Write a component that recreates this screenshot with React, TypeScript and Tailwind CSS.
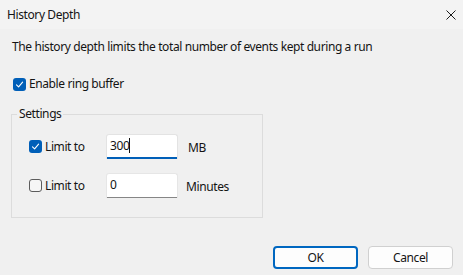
import React from "react";

const Check = () => (
  <svg width="9" height="9" viewBox="0 0 9 9" fill="none">
    <path d="M1.5 4.8 L3.6 6.8 L7.6 2.2" stroke="white" strokeWidth="1.1" strokeLinecap="round" strokeLinejoin="round" />
  </svg>
);

function Box({ checked }: { checked: boolean }) {
  return checked ? (
    <span className="w-[13px] h-[13px] rounded-[3px] bg-[#005fb8] flex items-center justify-center shrink-0">
      <Check />
    </span>
  ) : (
    <span className="w-[13px] h-[13px] rounded-[3px] border border-[#5c5c5c] bg-[#f6f6f6] shrink-0" />
  );
}

export default function App() {
  return (
    <div
      className="w-[463px] h-[275px] bg-[#f0f0f0] flex flex-col text-[12px] leading-[16px] tracking-[-0.4px] text-[#141414]"
      style={{ fontFamily: '"Segoe UI", "Noto Sans", "Liberation Sans", sans-serif' }}
    >
      <div className="h-[29px] bg-[#f3f3f3] flex items-center justify-between pl-[7px] pr-[7px] shrink-0">
        <span>History Depth</span>
        <svg width="10" height="10" viewBox="0 0 10 10">
          <path d="M0.5 0.5 L9.5 9.5 M9.5 0.5 L0.5 9.5" stroke="#1a1a1a" strokeWidth="1" />
        </svg>
      </div>

      <div className="flex flex-col pl-[12px] pt-[10px]">
        <div>The history depth limits the total number of events kept during a run</div>

        <div className="flex items-center gap-[3px] mt-[21px] ml-[1px]">
          <Box checked />
          <span>Enable ring buffer</span>
        </div>
      </div>

      <fieldset className="ml-[11px] mt-[14px] w-[252px] h-[112px] border border-[#dcdcdc] rounded-none px-0 flex flex-col">
        <legend className="ml-[5px] px-[2px]">Settings</legend>
        <div className="flex flex-col gap-[14px] mt-[12px] pl-[17px]">
          <div className="flex items-center h-[25px]">
            <div className="w-[77px] flex items-center gap-[3px]">
              <Box checked />
              <span>Limit to</span>
            </div>
            <div className="w-[72px] h-[25px] bg-white border border-[#e3e3e3] border-b-0 rounded-t-[3px] flex flex-col">
              <div className="flex-1 flex items-start pt-[3px] pl-[3px]">
                <span>300</span>
                <span className="w-[1px] h-[15px] bg-[#111]" />
              </div>
              <div className="h-[2px] bg-[#005fb8]" />
            </div>
            <span className="ml-[10px] mt-[2px]">MB</span>
          </div>
          <div className="flex items-center h-[25px]">
            <div className="w-[77px] flex items-center gap-[3px]">
              <Box checked={false} />
              <span>Limit to</span>
            </div>
            <div className="w-[72px] h-[25px] bg-white border border-[#e6e6e6] border-b-0 rounded-t-[3px] flex flex-col">
              <div className="flex-1 flex items-start pt-[3px] pl-[3px]">
                <span>0</span>
              </div>
              <div className="h-[1px] bg-[#868686]" />
            </div>
            <span className="ml-[8px] mt-[2px]">Minutes</span>
          </div>
        </div>
      </fieldset>

      <div className="flex justify-end gap-[10px] pr-[10px] mt-auto mb-[6px]">
        <button className="w-[85px] h-[23px] bg-[#fdfdfd] border-2 border-[#0067c0] rounded-[4px] flex items-center justify-center">
          OK
        </button>
        <button className="w-[85px] h-[23px] bg-[#fdfdfd] border border-[#d0d0d0] rounded-[4px] flex items-center justify-center">
          Cancel
        </button>
      </div>
    </div>
  );
}
